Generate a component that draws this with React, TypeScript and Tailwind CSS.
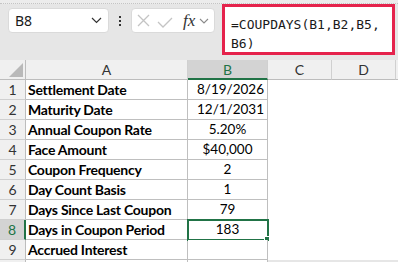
const rows: { label: string; value: string; align: 'right' | 'center' }[] = [
  { label: 'Settlement Date', value: '8/19/2026', align: 'right' },
  { label: 'Maturity Date', value: '12/1/2031', align: 'right' },
  { label: 'Annual Coupon Rate', value: '5.20%', align: 'center' },
  { label: 'Face Amount', value: '$40,000', align: 'center' },
  { label: 'Coupon Frequency', value: '2', align: 'center' },
  { label: 'Day Count Basis', value: '1', align: 'center' },
  { label: 'Days Since Last Coupon', value: '79', align: 'center' },
  { label: 'Days in Coupon Period', value: '183', align: 'center' },
  { label: 'Accrued Interest', value: '', align: 'center' },
];

const cellFont = { fontFamily: 'Lato, "Liberation Sans", sans-serif' };

function FormulaBar() {
  return (
    <div className="h-[60px] flex flex-col">
      <div className="h-[4px] bg-[#ececec] border-b border-dotted border-[#c4c4c4]" />
      <div className="flex items-start pl-2">
        <div className="mt-[4px] w-[101px] h-[25px] bg-white rounded-[4px] border border-[#dadada] flex items-center justify-between pl-[6px] pr-[6px]">
          <span className="text-[14px] text-[#1a1a1a]" style={{ fontFamily: '"Noto Sans", sans-serif' }}>
            B8
          </span>
          <svg width="11" height="7" viewBox="0 0 11 7">
            <path d="M1 1 L5.5 5.5 L10 1" fill="none" stroke="#333" strokeWidth="1.2" />
          </svg>
        </div>
        <div className="w-[22px] h-[33px] flex flex-col items-center justify-center gap-[2px]">
          <span className="w-[2px] h-[2px] bg-[#333]" />
          <span className="w-[2px] h-[2px] bg-[#333]" />
          <span className="w-[2px] h-[2px] bg-[#333]" />
        </div>
        <div className="mt-[4px] w-[84px] h-[25px] bg-white rounded-[4px] border border-[#dadada] flex items-center pl-[5px]">
          <svg width="13" height="13" viewBox="0 0 13 13">
            <path d="M1 1 L12 12 M12 1 L1 12" stroke="#c4c4c4" strokeWidth="1.3" />
          </svg>
          <svg width="16" height="11" viewBox="0 0 16 11" className="ml-[7px] mt-[4px]">
            <path d="M1 5 L6 10 L15 1" fill="none" stroke="#c4c4c4" strokeWidth="1.3" />
          </svg>
          <span
            className="ml-[10px] text-[17px] italic text-[#333] leading-none"
            style={{ fontFamily: '"Liberation Serif", serif' }}
          >
            fx
          </span>
          <svg width="10" height="6" viewBox="0 0 10 6" className="ml-[4px] mt-[1px]">
            <path d="M1 1 L5 5 L9 1" fill="none" stroke="#8a8a8a" strokeWidth="1.1" />
          </svg>
        </div>
        <div
          className="ml-[7px] w-[173px] h-[51px] bg-white border-[3px] border-[#e5234c] pl-[6px] pt-[8px] text-[13px] leading-[20px] text-[#1a1a1a]"
          style={{ fontFamily: '"DejaVu Sans Mono", "Liberation Mono", monospace' }}
        >
          <div>=COUPDAYS(B1,B2,B5,</div>
          <div className="-mt-[1px]">B6)</div>
        </div>
      </div>
    </div>
  );
}

function Grid() {
  const head = 'h-[20px] bg-[#f0f0f0] border-r border-b border-[#d0d0d0] flex items-center justify-center text-[14px] text-[#333]';
  return (
    <div className="grid grid-cols-[26px_162px_80px_64px_64px_2px] auto-rows-[20px]" style={cellFont}>
      <div className="h-[20px] bg-[#f0f0f0] border-r border-b border-[#bdbdbd] relative">
        <svg width="14" height="14" viewBox="0 0 14 14" className="absolute right-[2px] bottom-[2px]">
          <path d="M14 0 L14 14 L0 14 Z" fill="#b9b9b9" />
        </svg>
      </div>
      <div className={head + ' border-b-[#bdbdbd]'}>A</div>
      <div className="h-[20px] bg-[#d3d3d3] border-r border-[#d0d0d0] border-b-2 border-b-[#217346] flex items-center justify-center text-[14px] text-[#217346]">
        B
      </div>
      <div className={head + ' border-b-[#bdbdbd]'}>C</div>
      <div className={head + ' border-b-[#bdbdbd]'}>D</div>
      <div className="h-[20px] bg-[#f0f0f0] border-b border-[#bdbdbd]" />
      {rows.map((r, i) => {
        const sel = i === 7;
        return (
          <div key={r.label} className="contents">
            <div
              className={
                sel
                  ? 'bg-[#d3d3d3] border-b border-[#d0d0d0] border-r-2 border-r-[#217346] flex items-center justify-center text-[14px] text-[#217346]'
                  : 'bg-[#f0f0f0] border-r border-b border-[#d0d0d0] border-r-[#bdbdbd] flex items-center justify-center text-[14px] text-[#333]'
              }
            >
              {i + 1}
            </div>
            <div className="bg-white border-r border-b border-[#bfbfbf] pl-[2px] flex items-center text-[14px] font-bold text-black tracking-[-0.25px]">
              {r.label}
            </div>
            <div className="relative bg-white border-r border-b border-[#bfbfbf] flex items-center">
              <span className={'w-full text-[13.5px] text-black ' + (r.align === 'right' ? 'text-right pr-[3px]' : 'text-center')}>
                {r.value}
              </span>
              {sel && (
                <>
                  <div className="absolute -left-[1px] -top-[1px] w-[82px] h-[22px] border-2 border-[#217346]" />
                  <div className="absolute -right-[3px] -bottom-[3px] w-[6px] h-[6px] bg-[#217346] border border-white" />
                </>
              )}
            </div>
            <div className="bg-white" />
            <div className="bg-white" />
            <div className="bg-white" />
          </div>
        );
      })}
      <div className="h-[2px] bg-[#f0f0f0] border-r border-[#bdbdbd]" />
      <div className="h-[2px] bg-white border-r border-[#bfbfbf]" />
      <div className="h-[2px] bg-white border-r border-[#bfbfbf]" />
    </div>
  );
}

export default function App() {
  return (
    <div className="w-[398px] h-[262px] overflow-hidden bg-[#e6e6e6]">
      <FormulaBar />
      <Grid />
    </div>
  );
}
